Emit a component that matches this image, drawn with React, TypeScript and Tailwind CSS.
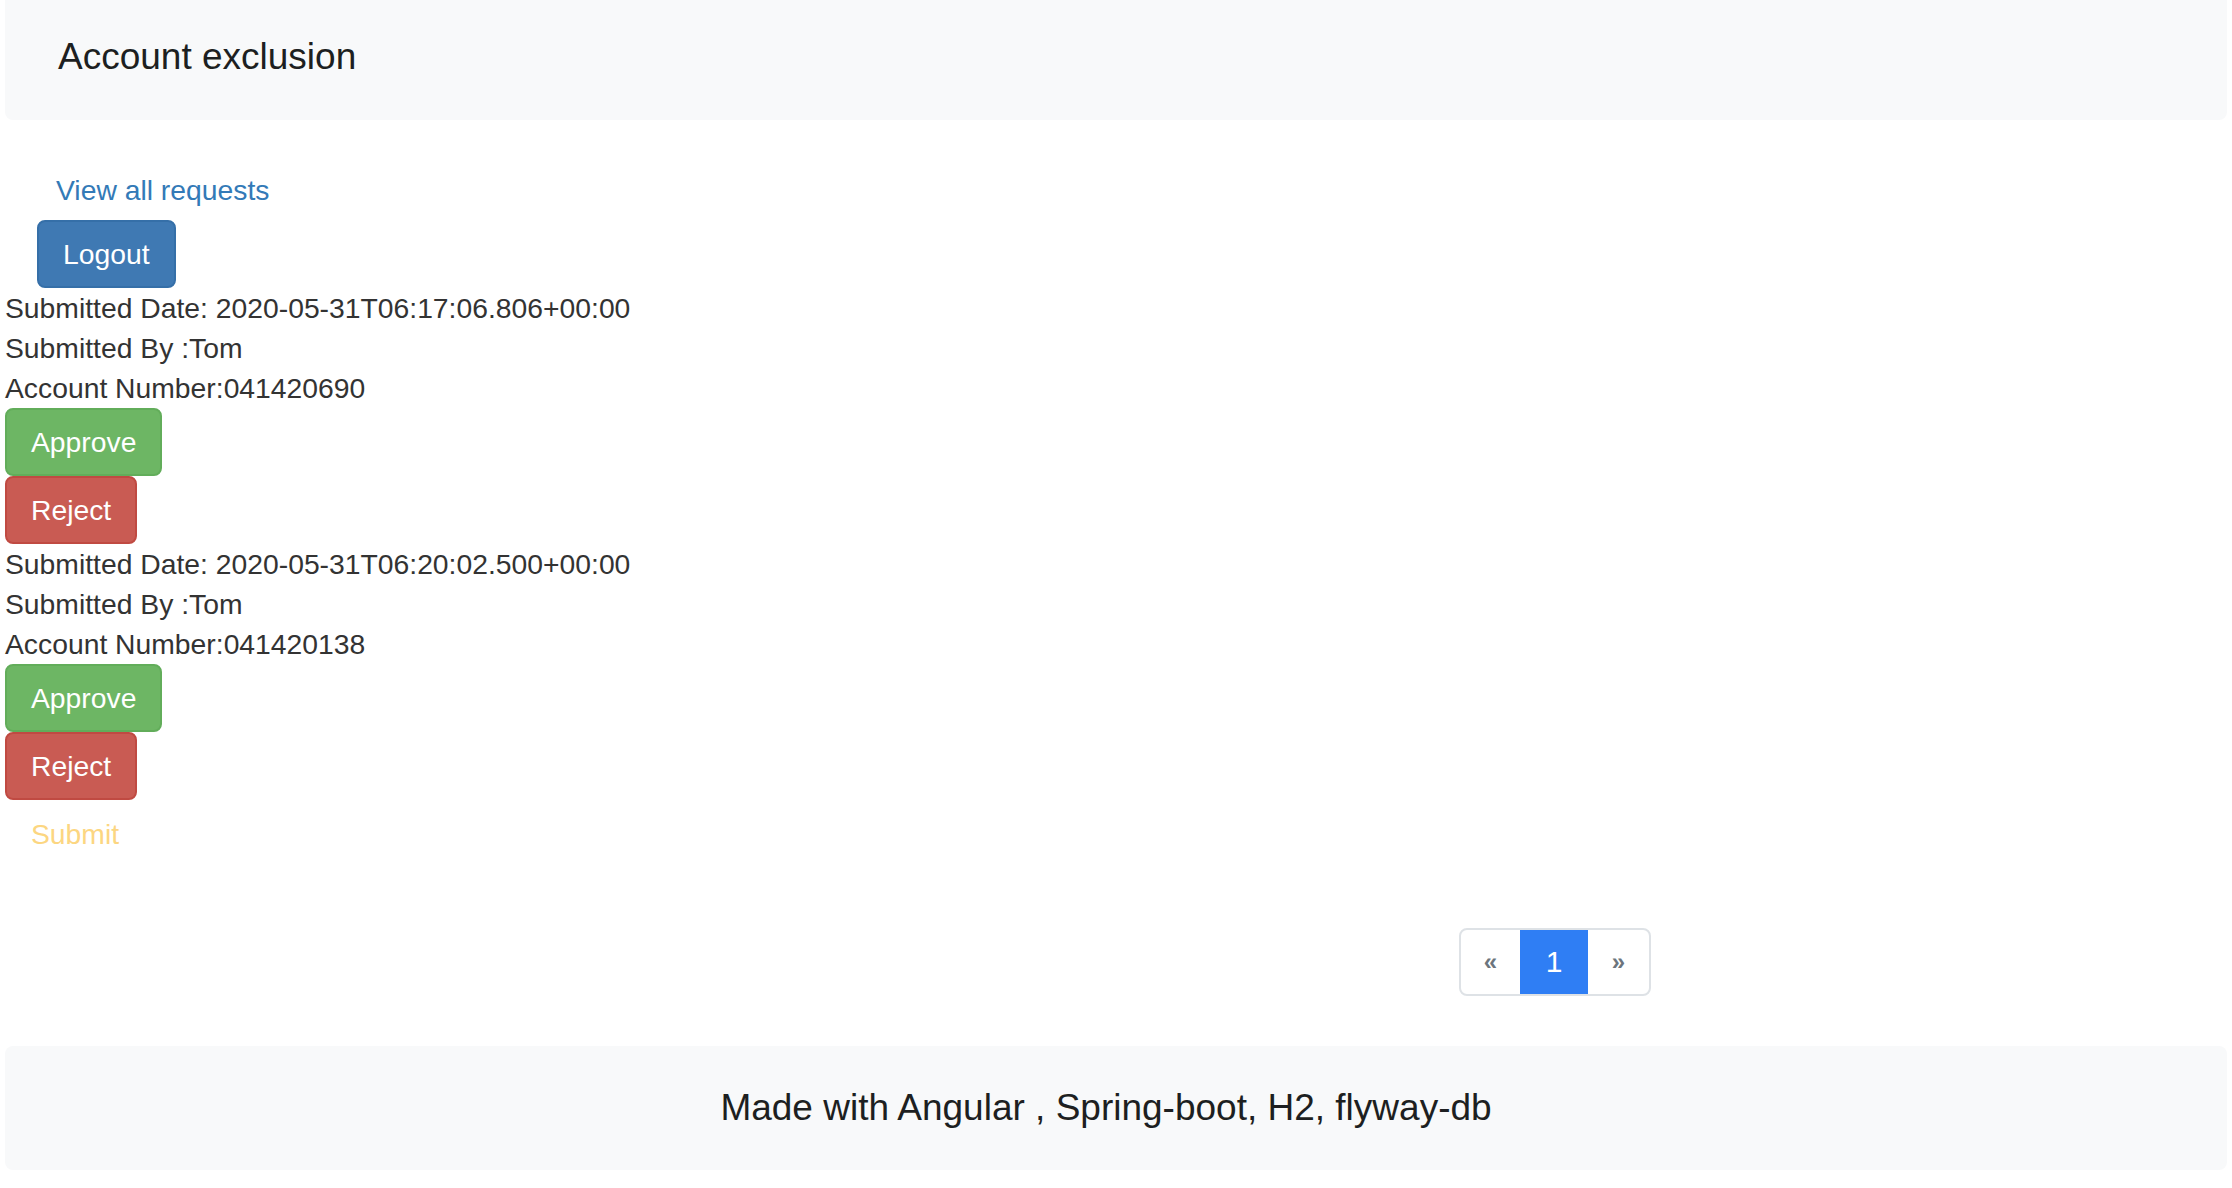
import React from "react";

const items = [
  { date: "2020-05-31T06:17:06.806+00:00", by: "Tom", account: "041420690" },
  { date: "2020-05-31T06:20:02.500+00:00", by: "Tom", account: "041420138" },
];

export default function App() {
  return (
    <div className="min-h-screen bg-white font-['Liberation_Sans',Arial,sans-serif] text-[#333333]">
      <header className="mx-[5px] h-[120px] rounded-b-[8px] bg-[#f8f9fa] pl-[53px] pt-[32px] text-[37px] leading-[50px] text-[#1d1f21]">
        Account exclusion
      </header>

      <main className="pt-[50px] text-[28.3px] leading-[40px]">
        <div className="pl-[56px]">
          <a href="#" className="text-[#337ab7]">
            View all requests
          </a>
        </div>
        <div className="mt-[10px] pl-[37px]">
          <button className="rounded-[8px] border-2 border-[#356fa8] bg-[#3f79b3] px-[24px] py-[12px] text-[28.3px] leading-[40px] text-white">
            Logout
          </button>
        </div>

        <div className="pl-[5px]">
          {items.map((it) => (
            <div key={it.account}>
              <div>Submitted Date: {it.date}</div>
              <div>Submitted By :{it.by}</div>
              <div>Account Number:{it.account}</div>
              <div>
                <button className="rounded-[8px] border-2 border-[#62ad5a] bg-[#6db664] px-[24px] py-[12px] text-[28.3px] leading-[40px] text-white">
                  Approve
                </button>
              </div>
              <div>
                <button className="rounded-[8px] border-2 border-[#c04a42] bg-[#c95b53] px-[24px] py-[12px] text-[28.3px] leading-[40px] text-white">
                  Reject
                </button>
              </div>
            </div>
          ))}
          <div>
            <button className="rounded-[8px] border-2 border-transparent bg-transparent px-[24px] py-[12px] text-[28.3px] leading-[40px] text-[#fcd681]">
              Submit
            </button>
          </div>
        </div>

        <div className="mt-[60px] flex pl-[1459px]">
          <div className="flex h-[68px] overflow-hidden rounded-[8px] border-2 border-[#dee2e6]">
            <div className="flex w-[59px] items-center justify-center text-[24px] font-bold text-[#6c757d]">
              «
            </div>
            <div className="-my-[2px] flex w-[68px] items-center justify-center bg-[#2f7ef4] text-[30px] text-white">
              1
            </div>
            <div className="flex w-[61px] items-center justify-center text-[24px] font-bold text-[#6c757d]">
              »
            </div>
          </div>
        </div>
      </main>

      <footer className="mx-[5px] mt-[50px] flex h-[124px] items-center justify-center rounded-[8px] bg-[#f8f9fa] pr-[20px] text-[37px] leading-[50px] text-[#1d1f21]">
        Made with Angular , Spring-boot, H2, flyway-db
      </footer>
    </div>
  );
}
